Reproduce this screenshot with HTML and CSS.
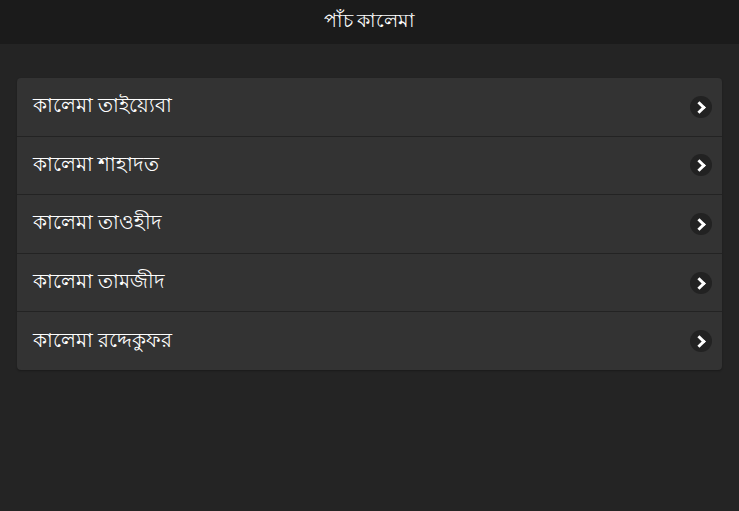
FILE: index.html
```html
<!DOCTYPE html>
<html lang="bn">
<head>
    <meta charset="UTF-8">
    <title>পাঁচ কালেমা</title>
    <link rel="stylesheet" href="styles.css">
</head>
<body>
    <header class="bar">
        <h1>পাঁচ কালেমা</h1>
    </header>
    <main class="content">
        <ul class="list">
            <li><span>কালেমা তাইয়্যেবা</span><i class="arrow"></i></li>
            <li><span>কালেমা শাহাদত</span><i class="arrow"></i></li>
            <li><span>কালেমা তাওহীদ</span><i class="arrow"></i></li>
            <li><span>কালেমা তামজীদ</span><i class="arrow"></i></li>
            <li><span>কালেমা রদ্দেকুফর</span><i class="arrow"></i></li>
        </ul>
    </main>
</body>
</html>
```
FILE: styles.css
```css
body {
    margin: 0;
    background-color: #242424;
    font-family: "Noto Sans", "DejaVu Sans", sans-serif;
    color: #fff;
}

.bar {
    height: 44px;
    background-color: #1b1b1b;
    display: flex;
    align-items: center;
    justify-content: center;
}

.bar h1 {
    margin: 0;
    font-size: 19px;
    font-weight: normal;
}

.content {
    padding: 34px 17px;
}

.list {
    list-style: none;
    margin: 0;
    padding: 0;
    background-color: #333;
    border-radius: 4px;
    box-shadow: 0 1px 2px rgba(0, 0, 0, 0.3);
}

.list li {
    height: 57.6px;
    display: flex;
    align-items: center;
    justify-content: space-between;
    padding: 0 10px 0 16px;
    border-bottom: 1px solid #232323;
    font-size: 20px;
}

.list li:last-child {
    border-bottom: none;
}

.arrow {
    width: 22px;
    height: 22px;
    border-radius: 50%;
    background-color: #222;
    position: relative;
}

.arrow::after {
    content: "";
    position: absolute;
    left: 5px;
    top: 7px;
    width: 6px;
    height: 6px;
    border-top: 3px solid #fff;
    border-right: 3px solid #fff;
    transform: rotate(45deg);
}
```
